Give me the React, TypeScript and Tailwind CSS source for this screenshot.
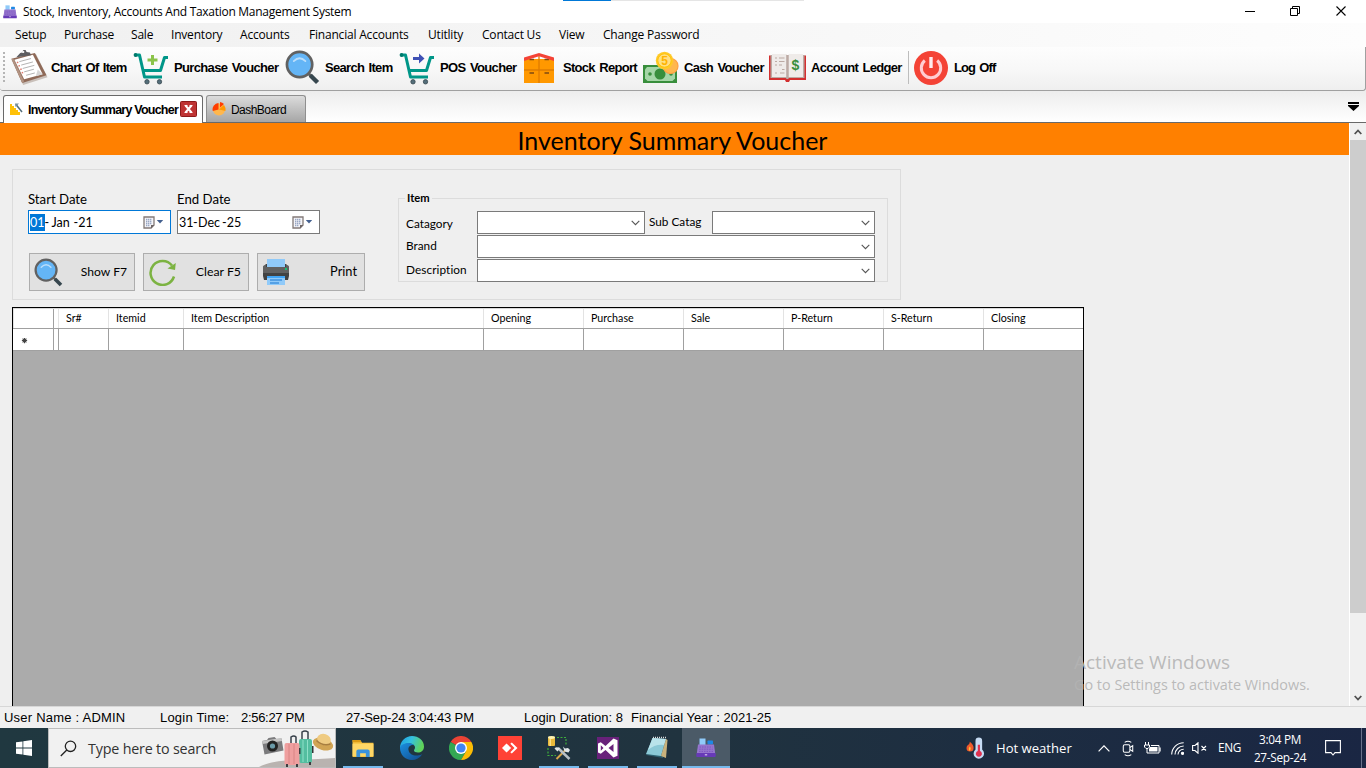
import type { ReactNode } from "react";

const menuItems = [
  { label: "Setup", cls: "w-[49px]" },
  { label: "Purchase", cls: "w-[67px]" },
  { label: "Sale", cls: "w-[40px]" },
  { label: "Inventory", cls: "w-[69px]" },
  { label: "Accounts", cls: "w-[69px]" },
  { label: "Financial Accounts", cls: "w-[119px]" },
  { label: "Utitlity", cls: "w-[54px]" },
  { label: "Contact Us", cls: "w-[77px]" },
  { label: "View", cls: "w-[44px]" },
  { label: "Change Password", cls: "w-[120px]" },
];

const columns = [
  { label: "", cls: "w-[41px] pl-[8px]" },
  { label: "", cls: "w-[5px]" },
  { label: "Sr#", cls: "w-[50px] pl-[7px]" },
  { label: "Itemid", cls: "w-[75px] pl-[7px]" },
  { label: "Item Description", cls: "w-[300px] pl-[7px]" },
  { label: "Opening", cls: "w-[100px] pl-[7px]" },
  { label: "Purchase", cls: "w-[100px] pl-[7px]" },
  { label: "Sale", cls: "w-[100px] pl-[7px]" },
  { label: "P-Return", cls: "w-[100px] pl-[7px]" },
  { label: "S-Return", cls: "w-[100px] pl-[7px]" },
  { label: "Closing", cls: "w-[99px] pl-[7px]" },
];

function RegisterIcon({ className }: { className: string }) {
  return (
    <svg viewBox="0 0 20 20" className={className}>
      <rect x="3.500" y="0.500" width="6" height="8" fill="#90caf9" />
      <rect x="11.500" y="2.500" width="5.500" height="4" rx="0.800" fill="#1e88e5" />
      <path d="M2 6.500h16l1.200 9H.8z" fill="#9575cd" />
      <path d="M3.500 9h13M3.200 11.200h13.600M3 13.400h14" stroke="#7e57c2" strokeWidth="1" strokeDasharray="1.500 1" />
      <rect x="0.300" y="15" width="19.400" height="4" rx="0.800" fill="#673ab7" />
      <rect x="8.800" y="16.200" width="2.400" height="1.200" fill="#d1c4e9" />
    </svg>
  );
}

function ClipboardIcon() {
  return (
    <svg viewBox="0 0 38 38" className="h-[37px] w-[38px]">
      <path d="M1 11 26 5 38 29 13 37z" fill="#c9c0ba" />
      <path d="M1 10 25 4 37 27 12 35z" fill="#8f6a58" />
      <path d="M1 10 3 10 14 33 12 35z" fill="#b39483" />
      <path d="M4 11 23 6 33 26 14 31z" fill="#fff" />
      <path d="M33 26 28 21l-2 7z" fill="#d6d6d6" />
      <g stroke="#a8a8a8" strokeWidth="0.900">
        <path d="m9 13 12-3.200M11 16.500l12-3.200M12.500 20l12-3.200M14 23.500l10-2.700M16 27l9-2.400" />
      </g>
      <g stroke="#e07a6c" strokeWidth="1.500">
        <path d="m6.500 14 1.500-.4M8.200 17.500l1.500-.4M10 21l1.500-.4M11.500 24.500l1.500-.4" />
      </g>
      <path d="M6 8.500 10 4l2-.5 1-2.500 2.500 0 1 2 3.500.5 1 3z" fill="#5d5d60" />
      <circle cx="13" cy="3" r="1.200" fill="#eee" />
    </svg>
  );
}

function CartIcon({ children }: { children: ReactNode }) {
  return (
    <svg viewBox="0 0 36 34" className="h-[34px] w-[36px]">
      <path d="M2 4H6.500L11.500 26H29" fill="none" stroke="#009688" strokeWidth="3" strokeLinejoin="round" />
      <path d="M35 6.500H31.500L27.500 19.500H10" fill="none" stroke="#009688" strokeWidth="3" strokeLinejoin="round" />
      <circle cx="2.500" cy="4" r="1.900" fill="#00796b" />
      <g fill="#546e7a" stroke="#37474f" strokeWidth="0.800">
        <circle cx="14" cy="30.800" r="2.200" />
        <circle cx="26.500" cy="30.800" r="2.200" />
      </g>
      {children}
    </svg>
  );
}

function SearchLensIcon({ className }: { className: string }) {
  return (
    <svg viewBox="0 0 36 36" className={className}>
      <path d="m23 23 4 4" stroke="#616161" strokeWidth="3" />
      <path d="m26 26 7.500 7.500" stroke="#37474f" strokeWidth="4.500" />
      <circle cx="15" cy="15" r="13" fill="#64b5f6" stroke="#616161" strokeWidth="2.800" />
      <path d="M9 11.500q6-6 12 0" fill="none" stroke="#bbdefb" strokeWidth="1.800" strokeLinecap="round" />
    </svg>
  );
}

function StockIcon() {
  return (
    <svg viewBox="0 0 30 30" className="h-[30px] w-[30px]">
      <path d="M0 6h30v24H0z" fill="#ff9800" />
      <path d="M15 3v27M0 17h30" stroke="#e07c00" strokeWidth="1.300" />
      <path d="M5.500 6.500h4.500M20.500 6.500H25M5.500 20h4.500M20.500 20H25" stroke="#7f4a12" strokeWidth="1.300" />
      <path d="M0 4.500 15 0l15 4.500V8L15 3.200 0 8z" fill="#f44336" />
    </svg>
  );
}

function CashIcon() {
  return (
    <svg viewBox="0 0 36 33" className="h-[33px] w-[36px]">
      <path d="M0 14h34v18H0z" fill="#388e3c" />
      <path d="M4 16h26l2 2.500v9L29.500 30H4.500L2 27.500v-9z" fill="#a5d6a7" />
      <circle cx="17" cy="23" r="5.500" fill="#388e3c" />
      <circle cx="7" cy="23" r="1.800" fill="#388e3c" />
      <circle cx="28" cy="23" r="1.800" fill="#388e3c" />
      <circle cx="27.500" cy="15" r="7.500" fill="#ffb74d" stroke="#ff9f43" strokeWidth="1.200" />
      <circle cx="21.500" cy="9.500" r="8.700" fill="#ffca28" />
      <circle cx="21.500" cy="9.500" r="6.700" fill="#ffe082" stroke="#ffc107" strokeWidth="1" />
      <text x="21.500" y="13.800" textAnchor="middle" fontSize="12" fontWeight="700" fill="#ffb300" fontFamily="Liberation Sans, sans-serif">5</text>
    </svg>
  );
}

function LedgerIcon() {
  return (
    <svg viewBox="0 0 37 28" className="h-[28px] w-[37px]">
      <path d="M0 1.500h37V26H21l-1 2h-3l-1-2H0z" fill="#d32f2f" />
      <path d="M1.500 1h34v23h-34z" fill="#bcaaa4" />
      <path d="M3 0h15v23H3zM19.500 0H34v23H19.500z" fill="#efebe9" />
      <path d="M17.200 1h2.300v24h-2.300z" fill="#bcaaa4" />
      <path d="M6 4h2M10 4h5.500M6 7.500h2M10 7.500h5.500M6 11h2M10 11h3M13 15.500h2.500M6 19h2M11 19h4.500" stroke="#bcaaa4" strokeWidth="1.200" />
      <text x="26.500" y="16" textAnchor="middle" fontSize="14" fontWeight="700" fill="#388e3c" fontFamily="Liberation Sans, sans-serif">$</text>
    </svg>
  );
}

function PowerIcon() {
  return (
    <svg viewBox="0 0 34 34" className="h-[34px] w-[34px]">
      <circle cx="17" cy="17" r="17" fill="#f44336" />
      <path d="M10.800 9.500a9.700 9.700 0 1 0 12.400 0" fill="none" stroke="#ffcdd2" strokeWidth="3" />
      <path d="M17 6v11" stroke="#ffebee" strokeWidth="3.400" />
    </svg>
  );
}

function ToolButton({ icon, label, box, text }: { icon: ReactNode; label: string; box: string; text: string }) {
  return (
    <div className={`flex h-full shrink-0 items-center ${box}`}>
      <span className="flex w-[40px] shrink-0 items-center justify-center">{icon}</span>
      <span className={`whitespace-nowrap font-['Liberation_Sans',sans-serif] text-[13px] font-bold leading-none [word-spacing:1.500px] ${text}`}>{label}</span>
    </div>
  );
}

function DatePicker({ border, children }: { border: string; children: ReactNode }) {
  return (
    <div className={`flex h-[24px] w-[143px] items-center justify-between border bg-white pl-px pr-[6px] ${border}`}>
      <span className="flex items-center text-[12.500px] leading-[17px]">{children}</span>
      <span className="flex items-center gap-px">
        <svg viewBox="0 0 12 13" className="h-[13px] w-[12px]">
          <path d="M1 1h10v8l-3 3H1z" fill="#f4f4f8" stroke="#837a78" strokeWidth="1.300" />
          <path d="M3 3.500h6M3 5.500h6M3 7.500h6M3 9.500h4" stroke="#9aa8c4" strokeWidth="1.300" strokeDasharray="1.400 0.600" />
          <path d="M11.500 9 8 12.500V9z" fill="#6e6666" />
        </svg>
        <svg viewBox="0 0 8 5" className="h-[4px] w-[8px]"><path d="M0 0h8L4 4.500z" fill="#44608f" /></svg>
      </span>
    </div>
  );
}

function Combo({ cls }: { cls: string }) {
  return (
    <div className={`flex h-[23px] items-center justify-end border border-[#7a7a7a] bg-white pr-[4px] ${cls}`}>
      <svg viewBox="0 0 9 6" className="h-[6px] w-[9px]"><path d="m.7.8 3.800 3.900L8.300.8" fill="none" stroke="#555" strokeWidth="1.100" /></svg>
    </div>
  );
}

function ActionButton({ icon, label, cls }: { icon: ReactNode; label: string; cls: string }) {
  return (
    <div className={`flex h-[38px] items-center justify-between border border-[#adadad] bg-[#e1e1e1] pl-[4px] pr-[7px] ${cls}`}>
      {icon}
      <span className="whitespace-nowrap">{label}</span>
    </div>
  );
}

function FilterPanel() {
  return (
    <section className="ml-[12px] mt-[14px] flex h-[131px] w-[889px] border border-[#dcdcdc] font-[Lato,sans-serif] text-black">
      <div className="w-[385px] pl-[15px] pt-[20px]">
        <div className="flex h-[20px] text-[13.200px] leading-[18px]">
          <span className="w-[149px]">Start Date</span>
          <span>End Date</span>
        </div>
        <div className="flex gap-[6px]">
          <DatePicker border="border-[#0078d7]">
            <span className="bg-[#0078d7] text-white">01</span>
            <span className="w-[7px]">-</span>
            <span className="w-[22px]">Jan</span>
            <span>-21</span>
          </DatePicker>
          <DatePicker border="border-[#7a7a7a]">
            <span className="w-[14px]">31</span>
            <span className="w-[5px]">-</span>
            <span className="w-[24px]">Dec</span>
            <span>-25</span>
          </DatePicker>
        </div>
        <div className="ml-px mt-[19px] flex gap-[8px]">
          <ActionButton cls="w-[106px] text-[12.100px]" label="Show F7" icon={<SearchLensIcon className="h-[29px] w-[29px]" />} />
          <ActionButton
            cls="w-[106px] text-[12.300px]"
            label="Clear F5"
            icon={
              <svg viewBox="0 0 28 28" className="h-[28px] w-[28px]">
                <path d="M26 18.500A12 12 0 1 1 24 7.500" fill="none" stroke="#7cb342" strokeWidth="2.500" />
                <path d="M27.800 5 27 12 19.500 10.500z" fill="#7cb342" />
              </svg>
            }
          />
          <ActionButton
            cls="w-[108px] text-[12.800px]"
            label="Print"
            icon={
              <svg viewBox="0 0 28 28" className="h-[28px] w-[28px]">
                <path d="M5 1h18v8H5z" fill="#90caf9" />
                <path d="M4 6h1v5h18V6h1l3 3v9l-1 4H2l-1-4V9z" fill="#424242" />
                <path d="M1 9q0-2 3-2v2h20V7q3 0 3 2v6H1z" fill="#616161" />
                <circle cx="24" cy="11" r="1" fill="#00e676" />
                <path d="M5 18h18v9H5z" fill="#90caf9" />
                <path d="M5 18h18v2H5z" fill="#42a5f5" />
                <path d="M8 22h12M8 25h9" stroke="#1976d2" strokeWidth="1.200" />
              </svg>
            }
          />
        </div>
      </div>
      <div className="relative mt-[28px] h-[84px] w-[490px] border border-[#dcdcdc] pl-[7px] pt-[12px] text-[11.800px]">
        <span className="absolute -top-[10px] left-[6px] bg-[#efefef] px-[2px] text-[11.200px] font-bold leading-[17px]">Item</span>
        <div className="flex h-[24px]">
          <span className="w-[71px] pt-[5px] leading-[16px]">Catagory</span>
          <Combo cls="w-[168px]" />
          <span className="w-[67px] pl-[4px] pt-[3px] leading-[16px]">Sub Catag</span>
          <Combo cls="w-[163px]" />
        </div>
        <div className="flex h-[24px]">
          <span className="w-[71px] pt-[3px] leading-[16px]">Brand</span>
          <Combo cls="w-[398px]" />
        </div>
        <div className="flex h-[24px]">
          <span className="w-[71px] pt-[3px] leading-[16px] tracking-[0.080px]">Description</span>
          <Combo cls="w-[398px]" />
        </div>
      </div>
    </section>
  );
}

function DataGrid() {
  return (
    <section className="ml-[12px] mt-[7px] flex min-h-0 w-[1072px] flex-1 flex-col border border-b-0 border-black bg-[#ababab] font-[Lato,sans-serif] text-[10.700px] text-black">
      <div className="flex h-[21px] shrink-0 border-b border-t border-b-[#a0a0a0] border-t-[#d8d8d8] bg-white">
        {columns.map((c, i) => (
          <div key={i} className={`shrink-0 border-r leading-[18px] ${c.cls} ${i === 0 ? "border-l border-l-[#e3e3e3] border-r-[#a0a0a0]" : i === 10 ? "border-r-white" : "border-r-[#e3e3e3]"}`}>
            {c.label}
          </div>
        ))}
      </div>
      <div className="flex h-[22px] shrink-0 border-b border-[#a0a0a0] bg-white">
        {columns.map((c, i) => (
          <div key={i} className={`flex shrink-0 items-center border-r pt-[2px] ${c.cls} ${i === 10 ? "border-r-white" : "border-r-[#a0a0a0]"}`}>
            {i === 0 && (
              <svg viewBox="0 0 8 8" className="h-[7px] w-[7px]">
                <path d="M4 1v6M1 4h6M1.800 1.800l4.400 4.400M6.200 1.800 1.800 6.200" stroke="#444" strokeWidth="1.300" />
              </svg>
            )}
          </div>
        ))}
      </div>
    </section>
  );
}

function TaskSlot({ children, bar = false, active = false }: { children: ReactNode; bar?: boolean; active?: boolean }) {
  return (
    <div className={`flex h-[40px] flex-col items-center justify-between ${active ? "ml-px w-[48px] bg-[#4b5a67]" : "w-[49px]"}`}>
      <span className="flex h-[38px] items-center pt-[2px]">{children}</span>
      <span className={`h-[2px] ${active ? "w-[48px]" : "w-[40px]"} ${bar ? "bg-[#76b9ed]" : ""}`} />
    </div>
  );
}

function Taskbar() {
  return (
    <footer className="flex h-[40px] shrink-0 items-center bg-linear-to-r from-[#203840] via-[#20333f] to-[#1a2643] font-['Open_Sans',sans-serif] text-white">
      <div className="flex w-[48px] justify-center">
        <svg viewBox="0 0 16 16" className="h-[16px] w-[16px]">
          <path d="M0 2.300 6.500 1.400v6.200H0zM7.300 1.300 16 0v7.600H7.300zM0 8.400h6.500v6.200L0 13.700zM7.300 8.400H16V16l-8.700-1.300z" fill="#fff" />
        </svg>
      </div>
      <div className="mr-[2px] flex h-[40px] w-[288px] items-center border border-[#bcbcbc] bg-[#f1f1f1] pl-[11px] text-[#333]">
        <svg viewBox="0 0 17 17" className="h-[17px] w-[17px]">
          <circle cx="10.500" cy="6.300" r="5.200" fill="none" stroke="#222" strokeWidth="1.300" />
          <path d="M6.800 10 .8 16" stroke="#222" strokeWidth="1.300" />
        </svg>
        <span className="ml-[11px] w-[171px] whitespace-nowrap pt-px text-[14.300px] tracking-[-0.180px]">Type here to search</span>
        <svg viewBox="0 0 76 38" className="h-[38px] w-[76px]">
          <path d="M0 38q10-6 36-7t40-2v9z" fill="#b9b3b0" />
          <path d="m3 12 5-1 1.500-2 6-1 2 2 5-.5 2 12-19 4z" fill="#7b7b7d" />
          <path d="m3 12 19.500-3 .5 3L3.500 15z" fill="#c5c5c5" />
          <circle cx="13.500" cy="17" r="5.500" fill="#222" />
          <circle cx="13.500" cy="17" r="2.600" fill="#6a9aa8" />
          <path d="M32 14V8q3-2 5 0v6M43 10V3q3-2 6 0v7" fill="none" stroke="#38404a" strokeWidth="1.500" />
          <rect x="40" y="10" width="13" height="24" rx="2" fill="#54bea0" />
          <path d="M44 11v22M48.500 11v22" stroke="#8fe0c8" strokeWidth="1" />
          <path d="M53 17h1.500v7H53z" fill="#333" />
          <rect x="25.500" y="14" width="15" height="22" rx="2" fill="#ef9f9f" />
          <path d="M30 15v20M35 15v20" stroke="#d98484" strokeWidth="1" />
          <path d="M40 19h1.500v6H40zM27 35h2v3h-2zM37 35h2v3h-2zM50 33h2v3h-2z" fill="#3c3c40" />
          <ellipse cx="64" cy="15" rx="10.500" ry="6" transform="rotate(18 64 15)" fill="#d1a454" />
          <ellipse cx="65" cy="10.500" rx="7" ry="5.500" transform="rotate(18 65 10.500)" fill="#efcb82" />
          <path d="M57.500 11.500q6 6 14 3.500" fill="none" stroke="#a87e40" strokeWidth="1.600" />
        </svg>
      </div>

      <TaskSlot bar>
        <svg viewBox="0 0 22 20" className="h-[19px] w-[22px]">
          <path d="M0 1h8l2 3h12v15H0z" fill="#f7c342" />
          <path d="M0 1h8l1.500 2.500H0z" fill="#dc9b15" />
          <path d="M0 5h22v13H0z" fill="#ffd766" />
          <path d="M4 19v-6q0-2 2-2h10q2 0 2 2v6h-4v-4H8v4z" fill="#3a92dc" />
        </svg>
      </TaskSlot>
      <TaskSlot>
        <svg viewBox="0 0 24 24" className="h-[24px] w-[24px]">
          <defs>
            <linearGradient id="edgeTop" x1="0" x2="1" y1="0" y2="0.300">
              <stop offset="0" stopColor="#1b9de2" /><stop offset="0.500" stopColor="#35c1e0" /><stop offset="1" stopColor="#5fd25a" />
            </linearGradient>
            <linearGradient id="edgeBody" x1="0" x2="1" y1="0" y2="1">
              <stop offset="0" stopColor="#1b8fe0" /><stop offset="1" stopColor="#114a8b" />
            </linearGradient>
          </defs>
          <path d="M0 12C0 5 5.500 0 12 0s12 4.500 12 10.500c0 4-3 6-6 6-2.500 0-4-1-4-2s1-1.500 1-3c0-2.500-3-4-6-4-5 0-9 3-9 7z" fill="url(#edgeTop)" />
          <path d="M0 11.500C1 8.500 5 7 8.500 7c2.500 0 4.500 1 5.500 2-4-.5-6 2-5.500 5 .6 4 5 6 9 5.500 2-.3 4-1 4.700-1.300C20 22 16 24 12 24 5 24 0 19 0 11.500z" fill="url(#edgeBody)" />
        </svg>
      </TaskSlot>
      <TaskSlot>
        <svg viewBox="0 0 24 24" className="h-[24px] w-[24px]">
          <path d="M12 12 1.600 6A12 12 0 0 1 22.400 6z" fill="#ea4335" />
          <path d="M12 12 1.600 6A12 12 0 0 0 12 24l5.200-9z" fill="#34a853" />
          <path d="M12 12V6h10.400A12 12 0 0 1 12 24l5.200-9z" fill="#fbbc05" />
          <circle cx="12" cy="12" r="6" fill="#fff" />
          <circle cx="12" cy="12" r="4.600" fill="#4285f4" />
        </svg>
      </TaskSlot>
      <TaskSlot>
        <svg viewBox="0 0 24 24" className="h-[24px] w-[24px]">
          <path d="M0 0h24v24H0z" fill="#ff4236" />
          <path d="m8.500 7.500 4.700 4.500-4.700 4.500L4 12z" fill="#fff" />
          <path d="m12.300 7.800 1.500-1.300L19.500 12l-5.700 5.500-1.500-1.300 4.200-4.200z" fill="#fff" />
        </svg>
      </TaskSlot>
      <TaskSlot bar>
        <svg viewBox="0 0 24 24" className="h-[24px] w-[24px]">
          <path d="M10 1.500h9v8M1 12v7.500h8" fill="none" stroke="#3fae3b" strokeWidth="1.200" strokeDasharray="2 1.500" />
          <rect x="1" y="1" width="7" height="9" rx="1" fill="#e9b93b" />
          <path d="M2.500 1h1.500v9H2.500z" fill="#fbe08a" />
          <ellipse cx="4.500" cy="1.500" rx="3.500" ry="1.400" fill="#fff3b0" />
          <path d="m9.500 23 9-9" stroke="#d8a64a" strokeWidth="2" />
          <path d="m11 12 11.500 11" stroke="#b9c1c7" strokeWidth="2.500" />
          <path d="M7.500 12.500q2-2.500 5.500 0l-2.500 3zM16 10.500l2 2 3-.5 2 2-1.500 2.500-4-1z" fill="#dfe5e8" />
        </svg>
      </TaskSlot>
      <TaskSlot bar>
        <svg viewBox="0 0 24 24" className="h-[24px] w-[24px]">
          <path d="M1 1h22v22H1z" fill="#68217a" />
          <path fillRule="evenodd" d="m17.500 2.500 4 1.700v15.600l-4 1.700-8-7.500-4.700 3.700L2 16.500v-9l2.800-1.200L9.500 10zM17.500 8l-5 4 5 4zM4.800 9.200v5.600L7.500 12z" fill="#fff" />
        </svg>
      </TaskSlot>
      <TaskSlot bar>
        <svg viewBox="0 0 24 24" className="h-[24px] w-[24px]">
          <path d="M8 3 22 4l-4 18-17-3z" fill="#2e6170" />
          <path d="M7.500 2 21 3l-5 17L1 18z" fill="#8bc9d6" />
          <path d="M7.500 2 21 3l-2 6Q10 8 3 14z" fill="#b9e3ea" />
          <path d="M8 1.500h13" stroke="#dcdcdc" strokeWidth="1.500" strokeDasharray="1 1" />
          <path d="m21 3 1.500 1-1.500 18-5-2z" fill="#c9b27c" />
        </svg>
      </TaskSlot>
      <TaskSlot bar active>
        <RegisterIcon className="h-[20px] w-[20px]" />
      </TaskSlot>

      <div className="ml-[236px] flex w-[30px] items-center">
        <svg viewBox="0 0 20 24" className="h-[23px] w-[19px]">
          <path d="M4 5q4 3 4 6.500a3.700 3.700 0 0 1-7.500 0Q.5 9 2.500 8q1.500-1 1.500-3z" fill="#f0592b" />
          <path d="M4 10q2 2 0 4.500Q1.800 13 4 10z" fill="#ffc23c" />
          <path d="M10 4a3.500 3.500 0 0 1 7 0v9a5.500 5.500 0 1 1-7 0z" fill="#c6dbf3" />
          <path d="M12.400 8h2.300v6.500a3.200 3.200 0 1 1-2.300 0z" fill="#e0314f" />
        </svg>
      </div>
      <span className="w-[102px] whitespace-nowrap pt-px text-[13.100px]">Hot weather</span>
      <svg viewBox="0 0 12 7" className="h-[7px] w-[12px]"><path d="m.6 6.300 5.400-5.500 5.400 5.500" fill="none" stroke="#fff" strokeWidth="1.200" /></svg>
      <svg viewBox="0 0 12 18" className="ml-[12px] h-[17px] w-[12px]" fill="none" stroke="#fff" strokeWidth="1.100">
        <rect x="1" y="5" width="7" height="8" rx="1.500" /><path d="m8 8 3-2v6l-3-2M2.500 2.500q3.500-2.500 7 0M2.500 15.500q3.500 2.500 7 0" />
      </svg>
      <svg viewBox="0 0 17 12" className="ml-[10px] h-[12px] w-[17px]" fill="none" stroke="#fff" strokeWidth="1">
        <path d="M1.500 0v3M4.500 0v3M.5 3h5v2L4 6.500H2L.5 5zM3 6.500V11h12V3.500H7" /><path d="M16 5.500v4" strokeWidth="1.300" /><path d="M6 5h7.500v4.500H5V7z" fill="#fff" stroke="none" />
      </svg>
      <svg viewBox="0 0 13 13" className="ml-[10px] h-[13px] w-[13px]" fill="none" stroke="#fff" strokeWidth="1.100">
        <path d="M.7 12.500A12 12 0 0 1 12.700.7M4 12.500A8.800 8.800 0 0 1 12.700 4M7 12.500a5.600 5.600 0 0 1 5.700-5.300" /><circle cx="11.500" cy="11.300" r="1.100" fill="#fff" />
      </svg>
      <svg viewBox="0 0 15 12" className="ml-[8px] h-[12px] w-[15px]" fill="none" stroke="#fff" strokeWidth="1.100">
        <path d="M.6 3.500h2.400L6 .8v10.400L3 8.500H.6zM9.500 4l4.500 4.500M14 4 9.500 8.500" />
      </svg>
      <span className="ml-[11px] w-[24px] whitespace-nowrap text-[11.800px] tracking-[-0.400px]">ENG</span>
      <div className="ml-[5px] w-[66px] whitespace-nowrap text-center text-[11.800px] leading-[18px] tracking-[-0.300px]">
        <div>3:04 PM</div>
        <div>27-Sep-24</div>
      </div>
      <svg viewBox="0 0 16 16" className="ml-[12px] h-[16px] w-[16px]"><path d="M.6.6h14.800v12H10l-2 2.400-2-2.400H.6z" fill="none" stroke="#fff" strokeWidth="1.100" /></svg>
      <span className="ml-auto mr-[4px] h-[40px] w-px bg-[#68718a]" />
    </footer>
  );
}

export default function App() {
  return (
    <div className="relative flex h-[768px] w-[1366px] flex-col overflow-hidden bg-white text-black">
      <div className="absolute left-[563px] top-0 flex h-px w-[241px] bg-[#e5e5e5]"><span className="h-px w-[48px] bg-[#0078d7]" /></div>
      <header className="flex h-[23px] shrink-0 items-center pl-[3px] font-['Open_Sans',sans-serif]">
        <RegisterIcon className="h-[14px] w-[14px]" />
        <span className="ml-[6px] whitespace-nowrap text-[12px] tracking-[-0.280px]">Stock, Inventory, Accounts And Taxation Management System</span>
        <svg viewBox="0 0 102 10" className="mb-[2px] ml-auto mr-[19px] h-[10px] w-[102px]" fill="none" stroke="#000" strokeWidth="1">
          <path d="M0 5.500h10M45.500 2.500h7v7h-7zM47.500 2V.5h7v7H53" /><path d="m91.500.5 9 9M100.500.5l-9 9" strokeWidth="1.100" />
        </svg>
      </header>

      <nav className="flex h-[24px] shrink-0 items-center bg-linear-to-r from-[#f0f0f0] to-[#fdfdfd] pl-[15px] font-['Open_Sans',sans-serif] text-[12px] tracking-[-0.200px]">
        {menuItems.map((m) => (
          <span key={m.label} className={`shrink-0 whitespace-nowrap ${m.cls}`}>{m.label}</span>
        ))}
      </nav>

      <div className="flex h-[44px] shrink-0 items-center rounded-b-[3px] border-b border-r border-[#a0a0a0] bg-linear-to-b from-[#fdfdfd] via-[#f8f8f8] to-[#efefef] pb-[2px]">
        <span className="ml-[3px] h-[31px] w-[2px] shrink-0 bg-[repeating-linear-gradient(to_bottom,#b5b5b5_0px,#b5b5b5_2px,transparent_2px,transparent_4px)]" />
        <ToolButton box="ml-[4px] w-[122px]" text="ml-[2px] tracking-[-0.750px]" label="Chart Of Item" icon={<ClipboardIcon />} />
        <ToolButton
          box="w-[151px]"
          text="ml-[3px] tracking-[-0.650px]"
          label="Purchase Voucher"
          icon={<CartIcon><path d="M18 4h3v3.500h3.500v3H21V14h-3v-3.500h-3.500v-3H18z" fill="#8bc34a" /></CartIcon>}
        />
        <ToolButton box="w-[115px]" text="ml-[3px] tracking-[-0.700px]" label="Search Item" icon={<SearchLensIcon className="h-[35px] w-[35px]" />} />
        <ToolButton
          box="w-[122px]"
          text="ml-[3px] tracking-[-0.650px]"
          label="POS Voucher"
          icon={<CartIcon><path d="M14 6h6V2.500l5.500 5L20 12.500V9h-6z" fill="#3f51b5" /></CartIcon>}
        />
        <ToolButton box="w-[122px]" text="ml-[4px] tracking-[-0.700px]" label="Stock Report" icon={<StockIcon />} />
        <ToolButton box="w-[126px]" text="ml-[3px] tracking-[-0.680px]" label="Cash Voucher" icon={<CashIcon />} />
        <ToolButton box="w-[141px]" text="ml-[4px] tracking-[-0.700px]" label="Account Ledger" icon={<LedgerIcon />} />
        <span className="h-[33px] w-px shrink-0 bg-[#bdbdbd]" />
        <ToolButton box="ml-[2px] w-[100px]" text="ml-[3px] tracking-[-0.900px]" label="Log Off" icon={<PowerIcon />} />
      </div>

      <div className="flex h-[32px] shrink-0 items-end border-b border-[#696969] bg-linear-to-b from-[#ededed] to-white pl-[3px]">
        <div className="-mb-px flex h-[28px] w-[200px] items-center rounded-t-[3px] border border-b-0 border-[#696969] bg-white pl-[6px]">
          <svg viewBox="0 0 13 13" className="h-[13px] w-[13px]">
            <path d="M0 1h2v2h2v2h2v2h2v2h2v3H0z" fill="#ffc107" /><path d="m12 9-6-7.500" stroke="#546e7a" strokeWidth="1.500" /><path d="M5 .5h4L5.500 4z" fill="#78909c" />
          </svg>
          <span className="ml-[5px] w-[152px] whitespace-nowrap pt-[2px] font-['Liberation_Sans',sans-serif] text-[12.500px] font-bold tracking-[-0.770px]">Inventory Summary Voucher</span>
          <svg viewBox="0 0 17 16" className="mb-px h-[16px] w-[17px]">
            <rect x="0.500" y="0.500" width="16" height="15" rx="1" fill="#bf3434" stroke="#8d1a1a" />
            <path d="m5.500 4.500 6 7M11.500 4.500l-6 7" stroke="#fff" strokeWidth="2" /><path d="M4.500 4.500h3M9.500 4.500h3M4.500 11.500h3M9.500 11.500h3" stroke="#fff" strokeWidth="1" />
          </svg>
        </div>
        <div className="ml-[3px] flex h-[27px] w-[100px] items-center rounded-t-[3px] border border-b-0 border-[#8f8f8f] bg-linear-to-b from-[#dcdcdc] to-[#a6a6a6] pl-[5px]">
          <svg viewBox="0 0 14 14" className="h-[14px] w-[14px]">
            <circle cx="7" cy="7.500" r="6" fill="#ffb74d" />
            <path d="M6.500 7.500V1a6.300 6.300 0 0 0-5.700 8z" fill="#ff3d00" />
            <path d="M8 5.500V0a6.500 6.500 0 0 1 4 2z" fill="#ff3d00" />
            <path d="m7 7.500 5-4.500q2 2.500 1.500 6z" fill="#ff9800" />
          </svg>
          <span className="ml-[5px] whitespace-nowrap pt-[2px] font-['Liberation_Sans',sans-serif] text-[12px] tracking-[-0.550px]">DashBoard</span>
        </div>
        <svg viewBox="0 0 11 9" className="mb-[11px] ml-auto mr-[7px] h-[9px] w-[11px]"><path d="M0 0h11v2H0zM0 3h11v1L5.500 9 0 4z" /></svg>
      </div>

      <main className="flex h-[583px] shrink-0 bg-[#efefef]">
        <div className="flex w-[1349px] flex-col">
          <h1 className="h-[32px] w-full shrink-0 bg-[#ff8000] pr-[4px] text-center font-[Lato,sans-serif] text-[25px] leading-[34px]">Inventory Summary Voucher</h1>
          <FilterPanel />
          <DataGrid />
        </div>
        <div className="flex w-[17px] flex-col items-center border-l border-white bg-[#f0f0f0]">
          <span className="flex h-[17px] items-center"><svg viewBox="0 0 8 6" className="h-[6px] w-[8px]"><path d="M.7 5 4 1.500 7.300 5" fill="none" stroke="#505050" strokeWidth="1.800" /></svg></span>
          <span className="h-[473px] w-[16px] bg-[#cdcdcd]" />
          <span className="mt-auto flex h-[17px] items-center"><svg viewBox="0 0 8 6" className="h-[6px] w-[8px]"><path d="M.7 1 4 4.500 7.300 1" fill="none" stroke="#505050" strokeWidth="1.800" /></svg></span>
        </div>
      </main>

      <div className="flex h-[22px] shrink-0 items-center whitespace-nowrap border-t border-[#d7d7d7] bg-[#f0f0f0] pl-[4px] font-['Liberation_Sans',sans-serif] text-[13px]">
        <span className="w-[156px] tracking-[0.220px]">User Name : ADMIN</span>
        <span className="w-[81px] tracking-[0.200px]">Login Time:</span>
        <span className="w-[105px] tracking-[-0.300px]">2:56:27 PM</span>
        <span className="w-[178px] tracking-[-0.150px]">27-Sep-24 3:04:43 PM</span>
        <span className="w-[107px]">Login Duration: 8</span>
        <span>Financial Year : 2021-25</span>
      </div>

      <Taskbar />

      <div className="absolute left-[1074px] top-[650px] whitespace-nowrap font-['Open_Sans',sans-serif] text-[#b3b3b3]/90">
        <div className="text-[19px] leading-[24px]">Activate Windows</div>
        <div className="text-[14.400px] leading-[22px]">Go to Settings to activate Windows.</div>
      </div>
    </div>
  );
}
